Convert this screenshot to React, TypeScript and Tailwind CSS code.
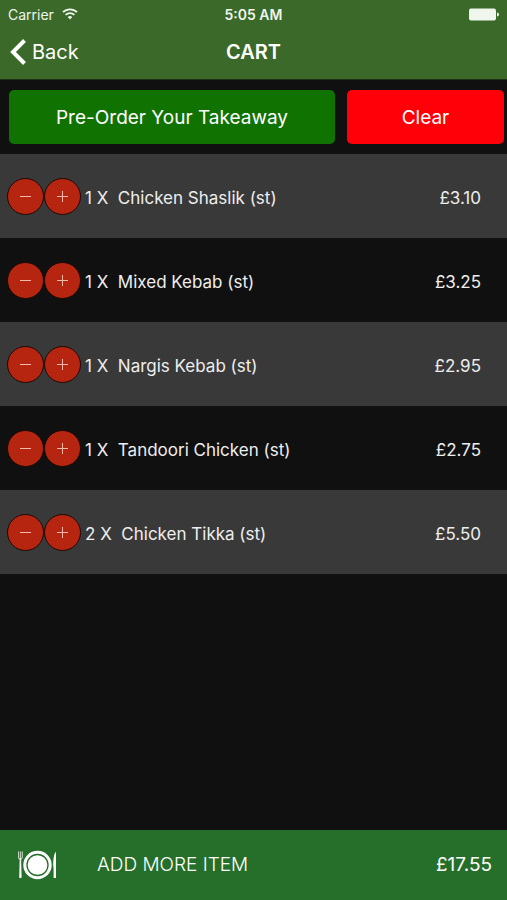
import { useState } from "react";

interface CartItem {
  id: number;
  name: string;
  qty: number;
  pence: number;
}

const INITIAL_ITEMS: CartItem[] = [
  { id: 1, name: "Chicken Shaslik (st)", qty: 1, pence: 310 },
  { id: 2, name: "Mixed Kebab (st)", qty: 1, pence: 325 },
  { id: 3, name: "Nargis Kebab (st)", qty: 1, pence: 295 },
  { id: 4, name: "Tandoori Chicken (st)", qty: 1, pence: 275 },
  { id: 5, name: "Chicken Tikka (st)", qty: 2, pence: 275 },
];

function formatPrice(pence: number) {
  return `£${(pence / 100).toFixed(2)}`;
}

function WifiIcon() {
  return (
    <svg viewBox="0 0 16 12" className="w-4 h-3" fill="none" stroke="currentColor" aria-hidden="true">
      <path d="M1 4.2a10 10 0 0 1 14 0" strokeWidth="1.8" />
      <path d="M3.6 6.9a6.3 6.3 0 0 1 8.8 0" strokeWidth="1.8" />
      <path d="M8 11.4 5.7 9a3.3 3.3 0 0 1 4.6 0z" fill="currentColor" stroke="none" />
    </svg>
  );
}

function BatteryIcon() {
  return (
    <svg viewBox="0 0 30 13" className="w-[30px] h-[13px]" fill="currentColor" aria-hidden="true">
      <rect x="0" y="0.5" width="27" height="12" rx="2" />
      <path d="M28 4.5c1.6.4 2 1.2 2 2s-.4 1.6-2 2z" />
    </svg>
  );
}

function PlateIcon() {
  return (
    <svg viewBox="0 0 40 32" className="w-10 h-8" fill="#fff" aria-hidden="true">
      <path
        d="M.5 2.500v5.500q0 2 1.800 2.200Q4.300 10 4.300 8V2.500M2.400 2.500V10"
        fill="none"
        stroke="#c3d3c2"
        strokeWidth="1.100"
      />
      <path d="M1.700 9.500h1.400l.5 19q-1.200 1.200-2.400 0z" />
      <circle cx="19.500" cy="16" r="14.200" />
      <circle cx="19.500" cy="16" r="10.500" fill="none" stroke="#266f2a" strokeWidth="1.300" />
      <path d="M38 2.500V29h-2.400V19q-.4-1-.4-4 0-9 2.800-12.500z" />
    </svg>
  );
}

interface RoundButtonProps {
  label: string;
  plus?: boolean;
  onClick: () => void;
}

function RoundButton({ label, plus, onClick }: RoundButtonProps) {
  return (
    <button
      aria-label={label}
      onClick={onClick}
      className="flex w-[37px] h-[37px] shrink-0 items-center justify-center rounded-full border border-[#1c0804] bg-[#b62510] text-[#f0b8a8]"
    >
      <svg viewBox="0 0 11 11" className="w-[11px] h-[11px]" stroke="currentColor" aria-hidden="true">
        <path d={plus ? "M0 5.5h11M5.5 0v11" : "M0 5.5h11"} />
      </svg>
    </button>
  );
}

export default function App() {
  const [items, setItems] = useState(INITIAL_ITEMS);

  const total = items.reduce((sum, item) => sum + item.qty * item.pence, 0);

  const changeQty = (id: number, delta: number) => {
    setItems((current) =>
      current
        .map((item) => (item.id === id ? { ...item, qty: item.qty + delta } : item))
        .filter((item) => item.qty > 0)
    );
  };

  return (
    <div className="flex min-h-screen flex-col bg-[#101010] font-['Inter','Liberation_Sans',sans-serif] text-white">
      <header className="border-b border-[#1f3016] bg-[#3a6929]">
        <div className="grid h-7 grid-cols-3 items-center px-2 text-[14px] text-[#f0f5ee]">
          <div className="flex items-center gap-2">
            <span>Carrier</span>
            <WifiIcon />
          </div>
          <span className="text-center font-semibold">5:05 AM</span>
          <div className="flex justify-end">
            <BatteryIcon />
          </div>
        </div>
        <div className="grid h-[51px] grid-cols-3 items-center px-2.5 pb-1">
          <button className="flex items-center gap-1.5 text-xl">
            <svg viewBox="0 0 16 26" className="w-4 h-[26px]" fill="none" stroke="currentColor" strokeWidth="4" aria-hidden="true">
              <path d="M14.5 1.5 3 13l11.5 11.5" />
            </svg>
            Back
          </button>
          <h1 className="text-center text-xl font-semibold">CART</h1>
        </div>
      </header>

      <div className="flex gap-3 pt-2.5 pr-[3px] pb-[10px] pl-[9px] text-[19px]">
        <button className="h-[54px] flex-[326] rounded-[5px] bg-[#107200] pt-0.5">Pre-Order Your Takeaway</button>
        <button className="h-[54px] flex-[157] rounded-[5px] bg-[#ff0008] pt-0.5">Clear</button>
      </div>

      <ul className="flex-1 text-[17px] text-[#eeeeee]">
        {items.map((item) => (
          <li key={item.id} className="flex h-[84px] items-center pt-1.5 pr-[26px] pl-[7px] odd:bg-[#393939]">
            <div className="flex pb-1.5">
              <RoundButton label={`Remove one ${item.name}`} onClick={() => changeQty(item.id, -1)} />
              <RoundButton label={`Add one ${item.name}`} plus onClick={() => changeQty(item.id, 1)} />
            </div>
            <span className="ml-1 flex-1 whitespace-pre">{`${item.qty} X  ${item.name}`}</span>
            <span>{formatPrice(item.qty * item.pence)}</span>
          </li>
        ))}
      </ul>

      <footer className="flex h-[70px] items-center bg-[#266f2a] pr-[15px] pl-[18px] text-[19px]">
        <button className="flex flex-1 items-center gap-[39px] font-light">
          <PlateIcon />
          ADD MORE ITEM
        </button>
        <span>{formatPrice(total)}</span>
      </footer>
    </div>
  );
}
